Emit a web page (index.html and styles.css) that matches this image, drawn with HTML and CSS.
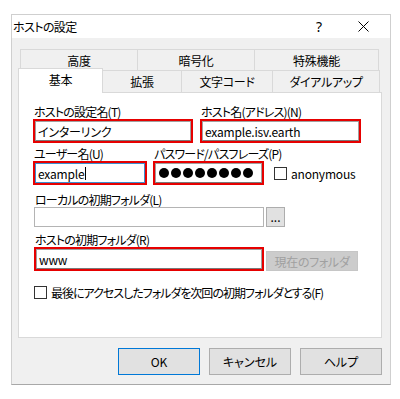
FILE: index.html
```html
<!DOCTYPE html>
<html lang="ja">
<head>
<meta charset="UTF-8">
<title>ホストの設定</title>
<link rel="stylesheet" href="styles.css">
</head>
<body>
    <div class="window">
        <div class="titlebar">
            <span class="title">ホストの設定</span>
            <span class="help">?</span>
            <span class="close">
                <svg width="11" height="11" viewBox="0 0 11 11"><path d="M0.5 0.5 L10.5 10.5 M10.5 0.5 L0.5 10.5" stroke="#000" stroke-width="1" fill="none"/></svg>
            </span>
        </div>
        <div class="tabs">
            <div class="tab-row upper">
                <div class="tab" style="width:118px">高度</div>
                <div class="tab" style="width:117px">暗号化</div>
                <div class="tab" style="width:124px">特殊機能</div>
            </div>
            <div class="tab-row lower">
                <div class="tab active" style="width:85px">基本</div>
                <div class="tab" style="width:79px">拡張</div>
                <div class="tab" style="width:91px">文字コード</div>
                <div class="tab" style="width:107px">ダイアルアップ</div>
            </div>
        </div>
        <div class="panel">
            <div class="row">
                <div class="field">
                    <label>ホストの設定名(T)</label>
                    <div class="mark" style="width:160px"><div class="input">インターリンク</div></div>
                </div>
                <div class="field">
                    <label>ホスト名(アドレス)(N)</label>
                    <div class="mark" style="width:161px"><div class="input">example.isv.earth</div></div>
                </div>
            </div>
            <div class="row row-2">
                <div class="field">
                    <label>ユーザー名(U)</label>
                    <div class="mark" style="width:114px"><div class="input focused">example<span class="caret"></span></div></div>
                </div>
                <div class="field field-pass">
                    <label>パスワード/パスフレーズ(P)</label>
                    <div class="pass-line">
                        <div class="mark" style="width:111px">
                            <div class="input dots">
                                <span></span><span></span><span></span><span></span><span></span><span></span><span></span><span></span>
                            </div>
                        </div>
                        <div class="check latin"><span class="box"></span>anonymous</div>
                    </div>
                </div>
            </div>
            <div class="field row-3">
                <label>ローカルの初期フォルダ(L)</label>
                <div class="line">
                    <div class="input plain"></div>
                    <button class="small">...</button>
                </div>
            </div>
            <div class="field row-4">
                <label>ホストの初期フォルダ(R)</label>
                <div class="line">
                    <div class="mark" style="width:230px"><div class="input">www</div></div>
                    <button class="current" disabled>現在のフォルダ</button>
                </div>
            </div>
            <div class="check row-5"><span class="box"></span>最後にアクセスしたフォルダを次回の初期フォルダとする(F)</div>
        </div>
        <div class="buttons">
            <button class="btn default">OK</button>
            <button class="btn">キャンセル</button>
            <button class="btn">ヘルプ</button>
        </div>
    </div>
</body>
</html>
```

FILE: styles.css
```css
body {
    margin: 0;
    background-color: #fff;
    font-family: "Noto Sans CJK JP", "Noto Sans", sans-serif;
    font-size: 12px;
    font-feature-settings: "palt";
    color: #000;
}
.window {
    margin: 14px 0 0 11px;
    width: 380px;
    height: 371px;
    box-sizing: border-box;
    border: 1px solid #cfcfcf;
    border-bottom-color: #a8a8a8;
    background-color: #f0f0f0;
}
.titlebar {
    display: flex;
    align-items: center;
    height: 23px;
    background-color: #fff;
}
.title {
    flex: 1;
    padding-left: 1px;
    line-height: 23px;
    letter-spacing: -0.6px;
}
.help {
    width: 12px;
    margin-right: 30px;
    font-size: 14px;
    font-family: "Noto Sans", sans-serif;
}
.close {
    display: flex;
    margin-right: 21px;
}
.tabs {
    margin-top: 11px;
}
.tab-row {
    display: flex;
}
.tab-row.upper {
    margin-left: 8px;
    height: 21px;
}
.tab-row.lower {
    margin-left: 6px;
    height: 22px;
}
.tab {
    box-sizing: border-box;
    border: 1px solid #d9d9d9;
    border-bottom: none;
    border-left: none;
    text-align: center;
    line-height: 21px;
    background-color: #f0f0f0;
    letter-spacing: -0.3px;
}
.tab:first-child {
    border-left: 1px solid #d9d9d9;
}
.tab.active {
    position: relative;
    z-index: 1;
    margin-top: -2px;
    height: 25px;
    background-color: #fff;
    line-height: 21px;
}
.panel {
    margin-left: 6px;
    width: 364px;
    height: 246px;
    box-sizing: border-box;
    border: 1px solid #d9d9d9;
    background-color: #fff;
    padding: 12px 0 0 14px;
}
.row {
    display: flex;
    gap: 7px;
}
.row-2 {
    margin-top: 4px;
    gap: 6px;
}
.field label {
    display: block;
    margin-left: 1px;
    line-height: 14px;
    letter-spacing: -0.8px;
}
.mark {
    box-sizing: border-box;
    height: 24px;
    border: 2px solid #e60000;
    display: flex;
}
.input {
    flex: 1;
    box-sizing: border-box;
    border: 1px solid #a0a0a0;
    border-bottom-color: #7a7a7a;
    background-color: #fff;
    padding-left: 2px;
    line-height: 17px;
    display: flex;
    align-items: center;
    letter-spacing: -0.2px;
}
.input.focused {
    border-color: #3c8fcf;
}
.caret {
    display: inline-block;
    width: 1px;
    height: 13px;
    background-color: #000;
    margin-left: 1px;
}
.input.dots {
    gap: 2px;
    padding-left: 3px;
}
.dots span {
    width: 10px;
    height: 10px;
    border-radius: 50%;
    background-color: #000;
}
.pass-line {
    display: flex;
    align-items: center;
    gap: 10px;
}
.check {
    display: flex;
    align-items: center;
    gap: 4px;
}
.check.latin {
    letter-spacing: -0.2px;
}
.box {
    width: 13px;
    height: 13px;
    box-sizing: border-box;
    border: 1px solid #333;
    background-color: #fff;
}
.row-3 {
    margin-top: 8px;
    margin-left: 1px;
}
.line {
    display: flex;
    align-items: flex-end;
    gap: 2px;
}
.input.plain {
    flex: none;
    width: 230px;
    height: 20px;
    border-color: #b4b4b4;
}
button {
    font-family: inherit;
    font-size: 12px;
    font-feature-settings: "palt";
    padding: 0;
}
.small {
    width: 19px;
    height: 20px;
    border: 1px solid #adadad;
    background-color: #e1e1e1;
    line-height: 14px;
}
.row-4 {
    margin-top: 6px;
    margin-left: 1px;
}
.current {
    width: 92px;
    height: 20px;
    border: 1px solid #c6c6c6;
    background-color: #cccccc;
    color: #a0a0a0;
    letter-spacing: -0.3px;
}
.row-5 {
    margin-top: 13px;
    margin-left: 1px;
    letter-spacing: -1px;
}
.buttons {
    display: flex;
    justify-content: flex-end;
    gap: 9px;
    margin-top: 10px;
    margin-right: 8px;
}
.btn {
    width: 82px;
    height: 27px;
    border: 1px solid #adadad;
    background-color: #e1e1e1;
}
.btn.default {
    border-color: #0078d7;
}
```
